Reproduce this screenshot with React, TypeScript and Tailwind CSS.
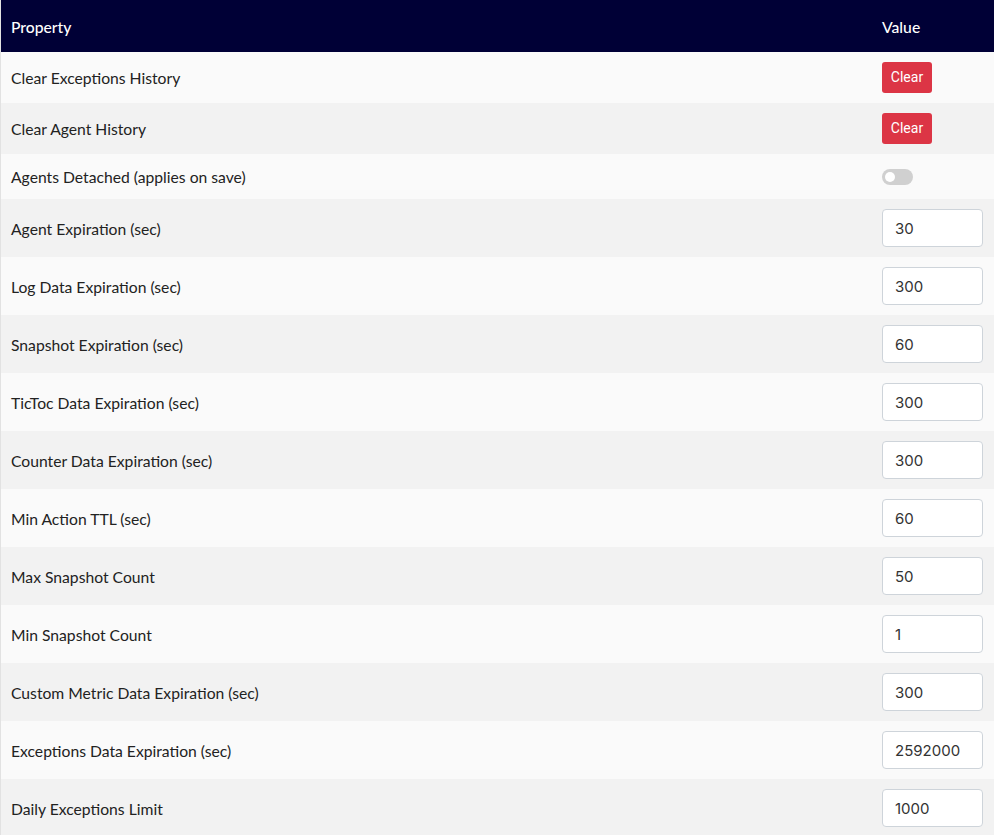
const rows: { label: string; kind: 'clear' | 'toggle' | 'input'; value?: string }[] = [
  { label: 'Clear Exceptions History', kind: 'clear' },
  { label: 'Clear Agent History', kind: 'clear' },
  { label: 'Agents Detached (applies on save)', kind: 'toggle' },
  { label: 'Agent Expiration (sec)', kind: 'input', value: '30' },
  { label: 'Log Data Expiration (sec)', kind: 'input', value: '300' },
  { label: 'Snapshot Expiration (sec)', kind: 'input', value: '60' },
  { label: 'TicToc Data Expiration (sec)', kind: 'input', value: '300' },
  { label: 'Counter Data Expiration (sec)', kind: 'input', value: '300' },
  { label: 'Min Action TTL (sec)', kind: 'input', value: '60' },
  { label: 'Max Snapshot Count', kind: 'input', value: '50' },
  { label: 'Min Snapshot Count', kind: 'input', value: '1' },
  { label: 'Custom Metric Data Expiration (sec)', kind: 'input', value: '300' },
  { label: 'Exceptions Data Expiration (sec)', kind: 'input', value: '2592000' },
  { label: 'Daily Exceptions Limit', kind: 'input', value: '1000' },
];

export default function App() {
  return (
    <div className="min-h-screen bg-white font-['Lato','Noto_Sans',sans-serif] text-[15.7px] text-[#222]">
      <table className="w-full border-collapse border-l border-[#e2e2e2]">
        <thead>
          <tr className="h-[52px] bg-[#000036] text-white">
            <th className="pb-[1px] pl-[10px] pr-[11px] pt-[4px] text-left font-medium">Property</th>
            <th className="w-[123px] px-[11px] pb-[1px] pt-[4px] text-left font-medium">Value</th>
          </tr>
        </thead>
        <tbody>
          {rows.map((r, i) => (
            <tr key={r.label} className={i % 2 === 0 ? 'bg-[#fafafa]' : 'bg-[#f2f2f2]'}>
              <td className="pb-[9px] pl-[10px] pr-[11px] pt-[11px] leading-[25px]">{r.label}</td>
              <td className="px-[11px] py-[10px] leading-[25px]">
                {r.kind === 'clear' && (
                  <button className="flex h-[31px] w-[50px] items-center justify-center rounded-[3px] bg-[#dc3545] font-['Roboto',sans-serif] text-[14px] text-white">
                    Clear
                  </button>
                )}
                {r.kind === 'toggle' && (
                  <div className="flex h-[16px] w-[31px] items-center rounded-full bg-[#d0d0d0] px-[3px]">
                    <div className="h-[10px] w-[10px] rounded-full bg-white" />
                  </div>
                )}
                {r.kind === 'input' && (
                  <input
                    readOnly
                    value={r.value}
                    className="h-[38px] w-[101px] rounded-[4px] border border-[#ced4da] bg-white px-[12px] font-['Inter',sans-serif] text-[15px] text-[#333] outline-none"
                  />
                )}
              </td>
            </tr>
          ))}
        </tbody>
      </table>
    </div>
  );
}
